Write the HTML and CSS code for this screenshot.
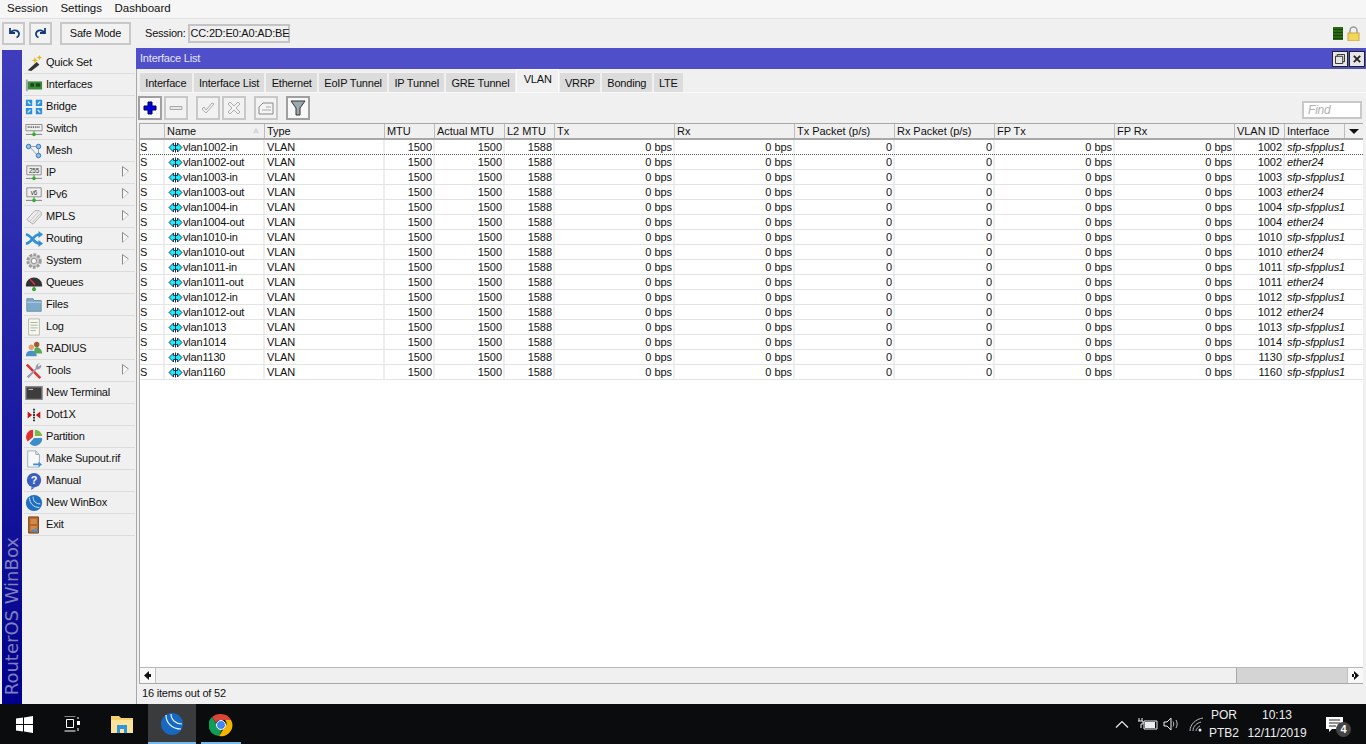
FILE: index.html
```html
<!DOCTYPE html>
<html lang="en">
<head>
<meta charset="utf-8">
<title>WinBox</title>
<link rel="stylesheet" href="styles.css">
</head>
<body>
<svg class="defs" width="0" height="0">
  <symbol id="vl" viewBox="0 0 15 11">
    <path d="M1 5.500 5.500 1v2.500h4V1L14 5.500 9.500 10V7.500h-4V10z" fill="#18eef6" stroke="#0a0a40" stroke-width=".8"/>
    <path d="M7.500.5v10" stroke="#0a2a50"/>
  </symbol>
  <symbol id="ar" viewBox="0 0 7 11">
    <path d="M.5.500v10L6.500 5z" fill="#f6f6f6"/>
    <path d="M.5 10.500V.5L6.500 5" fill="none" stroke="#8a8a8a"/>
    <path d="M6.500 5 .5 10.500" stroke="#d0d0d0"/>
  </symbol>
</svg>
<div class="menubar"><span>Session</span><span>Settings</span><span>Dashboard</span></div>
<div class="toolbar">
  <button class="tb"><svg width="14" height="12" viewBox="0 0 14 12"><path d="M3 1v5h5M3.500 6C5 3 9 2.500 11 4.500s1 5-1.500 6" fill="none" stroke="#123a7a" stroke-width="1.800"/></svg></button>
  <button class="tb"><svg width="14" height="12" viewBox="0 0 14 12"><path d="M11 1v5H6M10.500 6C9 3 5 2.500 3 4.500s-1 5 1.500 6" fill="none" stroke="#123a7a" stroke-width="1.800"/></svg></button>
  <button class="tb safe">Safe Mode</button>
  <span class="sess">Session:</span>
  <span class="sessbox">CC:2D:E0:A0:AD:BE</span>
  <span class="tbright">
    <span class="led"></span>
    <svg width="13" height="15" viewBox="0 0 13 15"><path d="M3 7V4.500a3.500 3.500 0 0 1 7 0V7" fill="none" stroke="#9a9a9a" stroke-width="1.500"/><rect x="1" y="7" width="11" height="8" fill="#f3d659" stroke="#c8a93a"/></svg>
  </span>
</div>
<div class="desk">
  <div class="brand"><span>RouterOS WinBox</span></div>
  <nav class="side">
    <div class="mi"><svg viewBox="0 0 20 20"><path d="M3 18 13 9l3 3-9 7z" fill="#333"/><path d="M11 3l1 3 3 1-3 1-1 3-1-3-3-1 3-1zM16 1l1 2 2 1-2 1-1 2-1-2-2-1 2-1z" fill="#e5b82e"/></svg>Quick Set</div>
    <div class="mi"><svg viewBox="0 0 20 20"><path d="M1 4h2v13H1z" fill="#9aa"/><path d="M3 6h16v9H3z" fill="#3c8a3c"/><path d="M6 8h4v4H6zM12 8h5v4h-5z" fill="#1a4a1a"/></svg>Interfaces</div>
    <div class="mi"><svg viewBox="0 0 20 20"><path d="M1 2h7v7H1zM12 2h7v7h-7zM1 11h7v7H1zM12 11h7v7h-7z" fill="#2d8fd8"/><path d="M3 4l3 3M17 4l-3 3M3 16l3-3M17 16l-3-3" stroke="#cfe8fa" stroke-width="1.500"/></svg>Bridge</div>
    <div class="mi"><svg viewBox="0 0 20 20"><path d="M1 5h18v7H1z" fill="#eee" stroke="#888"/><path d="M3 8h14" stroke="#555" stroke-dasharray="1 1" stroke-width="2"/><path d="M1 16h18" stroke="#777"/><path d="M10 12v4" stroke="#3a3"/><circle cx="10" cy="16" r="2" fill="#3a3"/></svg>Switch</div>
    <div class="mi"><svg viewBox="0 0 20 20"><path d="M4 5h11M15 5v10M6 6l7 8" stroke="#8a9aa8" fill="none"/><circle cx="4" cy="5" r="2.500" fill="#8fc1ea" stroke="#2d6fb0"/><circle cx="15" cy="5" r="2.500" fill="#8fc1ea" stroke="#2d6fb0"/><circle cx="15" cy="15" r="2.500" fill="#8fc1ea" stroke="#2d6fb0"/></svg>Mesh</div>
    <div class="mi"><svg viewBox="0 0 20 20"><path d="M2 2h16v10H2z" fill="#eee" stroke="#888"/><path d="M1 16h18" stroke="#777"/><path d="M10 12v4" stroke="#3a3"/><circle cx="10" cy="16" r="2" fill="#3a3"/><text x="10" y="10" class="ict">255</text></svg>IP<svg class="arr"><use href="#ar"/></svg></div>
    <div class="mi"><svg viewBox="0 0 20 20"><path d="M2 2h16v10H2z" fill="#eee" stroke="#888"/><path d="M1 16h18" stroke="#777"/><path d="M10 12v4" stroke="#3a3"/><circle cx="10" cy="16" r="2" fill="#3a3"/><text x="10" y="10" class="ict">v6</text></svg>IPv6<svg class="arr"><use href="#ar"/></svg></div>
    <div class="mi"><svg viewBox="0 0 20 20"><path d="M2 13 11 3h5l2 2v3l-9 10z" fill="#eee" stroke="#aaa"/><path d="M5 15l10-11M8 16 17 6" stroke="#bbb"/></svg>MPLS<svg class="arr"><use href="#ar"/></svg></div>
    <div class="mi"><svg viewBox="0 0 20 20"><path d="M1 5c6 0 8 10 15 10M1 15c6 0 8-10 15-10" fill="none" stroke="#2d8fd8" stroke-width="3"/><path d="M15 1l5 4-5 4zM15 11l5 4-5 4z" fill="#2d8fd8"/></svg>Routing<svg class="arr"><use href="#ar"/></svg></div>
    <div class="mi"><svg viewBox="0 0 20 20"><circle cx="10" cy="10" r="7" fill="#ccc" stroke="#999" stroke-width="3" stroke-dasharray="3 1.500"/><circle cx="10" cy="10" r="3" fill="#f4f4f4" stroke="#888"/></svg>System<svg class="arr"><use href="#ar"/></svg></div>
    <div class="mi"><svg viewBox="0 0 20 20"><path d="M1 12a9 8 0 0 1 18 0v2H1z" fill="#333"/><path d="M6 6l5 6" stroke="#e33" stroke-width="1.500"/><path d="M10 14v3" stroke="#333"/><circle cx="10" cy="17" r="2.200" fill="#3a3"/></svg>Queues</div>
    <div class="mi"><svg viewBox="0 0 20 20"><path d="M2 3h7l1 2h8v12H2z" fill="#7fa9c9" stroke="#6b8ea8"/><path d="M2 7h16" stroke="#bcd4e6"/></svg>Files</div>
    <div class="mi"><svg viewBox="0 0 20 20"><path d="M4 1h12v18H4z" fill="#f8f8f0" stroke="#b5b5a8"/><path d="M6 5h8M6 8h8M6 11h8M6 14h6" stroke="#9ab09a"/></svg>Log</div>
    <div class="mi"><svg viewBox="0 0 20 20"><circle cx="7" cy="8" r="3" fill="#e0a070"/><path d="M1 18c0-5 3-6 6-6s6 1 6 6z" fill="#4a8fc8"/><circle cx="13" cy="5" r="3" fill="#a05a2a"/><path d="M10 15c0-5 1-7 3-7s6 2 6 7z" fill="#58a85a"/></svg>RADIUS</div>
    <div class="mi"><svg viewBox="0 0 20 20"><path d="M3 2l15 15-2 2L1 4z" fill="#d33"/><path d="M17 2a4 4 0 0 0-5 5L2 16l2 2 9-10a4 4 0 0 0 5-5l-3 2-1-2z" fill="#99a"/></svg>Tools<svg class="arr"><use href="#ar"/></svg></div>
    <div class="mi"><svg viewBox="0 0 20 20"><path d="M1 3h18v14H1z" fill="#3d3d3d" stroke="#888" stroke-width="1.500"/><path d="M4 6h5" stroke="#ddd"/></svg>New Terminal</div>
    <div class="mi"><svg viewBox="0 0 20 20"><path d="M10 3v14" stroke="#222" stroke-dasharray="2 1" stroke-width="2"/><path d="M8 10 3 6v8zM12 10l5-4v8z" fill="#c01818"/></svg>Dot1X</div>
    <div class="mi"><svg viewBox="0 0 20 20"><path d="M9 2a8 8 0 0 0-6 13l6-5z" fill="#d33"/><path d="M11 2a8 8 0 0 1 8 7h-8z" fill="#7cb84a"/><path d="M19 11a8 8 0 0 1-14 6l5-6z" fill="#3a8fc8"/></svg>Partition</div>
    <div class="mi"><svg viewBox="0 0 20 20"><path d="M3 1h9l4 4v14H3z" fill="#f8f8f8" stroke="#9ab"/><path d="M12 1v4h4" fill="#cde" stroke="#9ab"/><path d="M9 15h6v-2l4 3-4 3v-2H9z" fill="#3a8fd8"/></svg>Make Supout.rif</div>
    <div class="mi"><svg viewBox="0 0 20 20"><circle cx="10" cy="9" r="8" fill="#3b5fc0"/><path d="M7 17v3l4-3z" fill="#3b5fc0"/><text x="10" y="13" class="icq">?</text></svg>Manual</div>
    <div class="mi"><svg viewBox="0 0 20 20"><circle cx="10" cy="10" r="9" fill="#1f6fc0"/><path d="M5 4c0 6 4 11 11 11M9 3c0 5 3 8 8 8" fill="none" stroke="#dcecf8"/></svg>New WinBox</div>
    <div class="mi"><svg viewBox="0 0 20 20"><path d="M4 1h11v18H4z" fill="#b5652a" stroke="#7a4018"/><path d="M6 3h7v6H6zM6 11h7v6H6z" fill="#d08a4a"/><path d="M9 15h5v-2l-8 3 8 3v-2" fill="#3a8fd8"/></svg>Exit</div>
  </nav>
  <main class="win">
    <header class="wintitle">
      <span>Interface List</span>
      <span class="wbtns">
        <span class="wbtn"><svg width="11" height="11" viewBox="0 0 11 11"><path d="M.5 2.500h8v8h-8zM2.500 2.500v-2h8v8h-2" fill="none" stroke="#222"/></svg></span>
        <span class="wbtn"><svg width="11" height="11" viewBox="0 0 11 11"><path d="M2 2l7 7M9 2l-7 7" stroke="#222" stroke-width="2"/></svg></span>
      </span>
    </header>
    <div class="tabs">
      <span class="tab">Interface</span><span class="tab">Interface List</span><span class="tab">Ethernet</span><span class="tab">EoIP Tunnel</span><span class="tab">IP Tunnel</span><span class="tab">GRE Tunnel</span><span class="tab on">VLAN</span><span class="tab">VRRP</span><span class="tab">Bonding</span><span class="tab">LTE</span>
    </div>
    <div class="actions">
      <button class="ab"><svg width="14" height="14" viewBox="0 0 14 14"><path d="M5 1h4v4h4v4H9v4H5V9H1V5h4z" fill="#0000e0" stroke="#00004a"/></svg></button>
      <button class="ab"><svg width="14" height="6" viewBox="0 0 14 6"><path d="M1 1.500h12v3H1z" fill="#e6e6e6" stroke="#aaa"/></svg></button>
      <button class="ab gap"><svg width="16" height="14" viewBox="0 0 16 14"><path d="M2 8l4 4 8-9-2-1-6 7-2-3z" fill="#f4f4f4" stroke="#aaa"/></svg></button>
      <button class="ab"><svg width="14" height="14" viewBox="0 0 14 14"><path d="M3 1l4 4 4-4 2 2-4 4 4 4-2 2-4-4-4 4-2-2 4-4-4-4z" fill="#f4f4f4" stroke="#aaa"/></svg></button>
      <button class="ab gap"><svg width="16" height="13" viewBox="0 0 16 13"><path d="M1 5l4-4h10v11H1z" fill="#f4f4f4" stroke="#888"/><path d="M8 5h5M4 8h9" stroke="#aaa"/></svg></button>
      <button class="ab gap"><svg width="16" height="16" viewBox="0 0 16 16"><path d="M1 1h14L10 8v7H6V8z" fill="#9aa8b0" stroke="#333"/></svg></button>
      <span class="find">Find</span>
    </div>
    <section class="grid">
      <div class="row head">
        <span></span><span class="nm">Name<i class="sort"></i></span><span>Type</span><span>MTU</span><span>Actual MTU</span><span>L2 MTU</span><span>Tx</span><span>Rx</span><span>Tx Packet (p/s)</span><span>Rx Packet (p/s)</span><span>FP Tx</span><span>FP Rx</span><span>VLAN ID</span><span>Interface</span><span class="drop"><i></i></span>
      </div>
      <div class="row first"><span class="st">S</span><span class="nm"><svg class="vl"><use href="#vl"/></svg>vlan1002-in</span><span>VLAN</span><span class="r">1500</span><span class="r">1500</span><span class="r">1588</span><span class="r">0 bps</span><span class="r">0 bps</span><span class="r">0</span><span class="r">0</span><span class="r">0 bps</span><span class="r">0 bps</span><span class="r">1002</span><span class="if">sfp-sfpplus1</span></div>
      <div class="row"><span class="st">S</span><span class="nm"><svg class="vl"><use href="#vl"/></svg>vlan1002-out</span><span>VLAN</span><span class="r">1500</span><span class="r">1500</span><span class="r">1588</span><span class="r">0 bps</span><span class="r">0 bps</span><span class="r">0</span><span class="r">0</span><span class="r">0 bps</span><span class="r">0 bps</span><span class="r">1002</span><span class="if">ether24</span></div>
      <div class="row"><span class="st">S</span><span class="nm"><svg class="vl"><use href="#vl"/></svg>vlan1003-in</span><span>VLAN</span><span class="r">1500</span><span class="r">1500</span><span class="r">1588</span><span class="r">0 bps</span><span class="r">0 bps</span><span class="r">0</span><span class="r">0</span><span class="r">0 bps</span><span class="r">0 bps</span><span class="r">1003</span><span class="if">sfp-sfpplus1</span></div>
      <div class="row"><span class="st">S</span><span class="nm"><svg class="vl"><use href="#vl"/></svg>vlan1003-out</span><span>VLAN</span><span class="r">1500</span><span class="r">1500</span><span class="r">1588</span><span class="r">0 bps</span><span class="r">0 bps</span><span class="r">0</span><span class="r">0</span><span class="r">0 bps</span><span class="r">0 bps</span><span class="r">1003</span><span class="if">ether24</span></div>
      <div class="row"><span class="st">S</span><span class="nm"><svg class="vl"><use href="#vl"/></svg>vlan1004-in</span><span>VLAN</span><span class="r">1500</span><span class="r">1500</span><span class="r">1588</span><span class="r">0 bps</span><span class="r">0 bps</span><span class="r">0</span><span class="r">0</span><span class="r">0 bps</span><span class="r">0 bps</span><span class="r">1004</span><span class="if">sfp-sfpplus1</span></div>
      <div class="row"><span class="st">S</span><span class="nm"><svg class="vl"><use href="#vl"/></svg>vlan1004-out</span><span>VLAN</span><span class="r">1500</span><span class="r">1500</span><span class="r">1588</span><span class="r">0 bps</span><span class="r">0 bps</span><span class="r">0</span><span class="r">0</span><span class="r">0 bps</span><span class="r">0 bps</span><span class="r">1004</span><span class="if">ether24</span></div>
      <div class="row"><span class="st">S</span><span class="nm"><svg class="vl"><use href="#vl"/></svg>vlan1010-in</span><span>VLAN</span><span class="r">1500</span><span class="r">1500</span><span class="r">1588</span><span class="r">0 bps</span><span class="r">0 bps</span><span class="r">0</span><span class="r">0</span><span class="r">0 bps</span><span class="r">0 bps</span><span class="r">1010</span><span class="if">sfp-sfpplus1</span></div>
      <div class="row"><span class="st">S</span><span class="nm"><svg class="vl"><use href="#vl"/></svg>vlan1010-out</span><span>VLAN</span><span class="r">1500</span><span class="r">1500</span><span class="r">1588</span><span class="r">0 bps</span><span class="r">0 bps</span><span class="r">0</span><span class="r">0</span><span class="r">0 bps</span><span class="r">0 bps</span><span class="r">1010</span><span class="if">ether24</span></div>
      <div class="row"><span class="st">S</span><span class="nm"><svg class="vl"><use href="#vl"/></svg>vlan1011-in</span><span>VLAN</span><span class="r">1500</span><span class="r">1500</span><span class="r">1588</span><span class="r">0 bps</span><span class="r">0 bps</span><span class="r">0</span><span class="r">0</span><span class="r">0 bps</span><span class="r">0 bps</span><span class="r">1011</span><span class="if">sfp-sfpplus1</span></div>
      <div class="row"><span class="st">S</span><span class="nm"><svg class="vl"><use href="#vl"/></svg>vlan1011-out</span><span>VLAN</span><span class="r">1500</span><span class="r">1500</span><span class="r">1588</span><span class="r">0 bps</span><span class="r">0 bps</span><span class="r">0</span><span class="r">0</span><span class="r">0 bps</span><span class="r">0 bps</span><span class="r">1011</span><span class="if">ether24</span></div>
      <div class="row"><span class="st">S</span><span class="nm"><svg class="vl"><use href="#vl"/></svg>vlan1012-in</span><span>VLAN</span><span class="r">1500</span><span class="r">1500</span><span class="r">1588</span><span class="r">0 bps</span><span class="r">0 bps</span><span class="r">0</span><span class="r">0</span><span class="r">0 bps</span><span class="r">0 bps</span><span class="r">1012</span><span class="if">sfp-sfpplus1</span></div>
      <div class="row"><span class="st">S</span><span class="nm"><svg class="vl"><use href="#vl"/></svg>vlan1012-out</span><span>VLAN</span><span class="r">1500</span><span class="r">1500</span><span class="r">1588</span><span class="r">0 bps</span><span class="r">0 bps</span><span class="r">0</span><span class="r">0</span><span class="r">0 bps</span><span class="r">0 bps</span><span class="r">1012</span><span class="if">ether24</span></div>
      <div class="row"><span class="st">S</span><span class="nm"><svg class="vl"><use href="#vl"/></svg>vlan1013</span><span>VLAN</span><span class="r">1500</span><span class="r">1500</span><span class="r">1588</span><span class="r">0 bps</span><span class="r">0 bps</span><span class="r">0</span><span class="r">0</span><span class="r">0 bps</span><span class="r">0 bps</span><span class="r">1013</span><span class="if">sfp-sfpplus1</span></div>
      <div class="row"><span class="st">S</span><span class="nm"><svg class="vl"><use href="#vl"/></svg>vlan1014</span><span>VLAN</span><span class="r">1500</span><span class="r">1500</span><span class="r">1588</span><span class="r">0 bps</span><span class="r">0 bps</span><span class="r">0</span><span class="r">0</span><span class="r">0 bps</span><span class="r">0 bps</span><span class="r">1014</span><span class="if">sfp-sfpplus1</span></div>
      <div class="row"><span class="st">S</span><span class="nm"><svg class="vl"><use href="#vl"/></svg>vlan1130</span><span>VLAN</span><span class="r">1500</span><span class="r">1500</span><span class="r">1588</span><span class="r">0 bps</span><span class="r">0 bps</span><span class="r">0</span><span class="r">0</span><span class="r">0 bps</span><span class="r">0 bps</span><span class="r">1130</span><span class="if">sfp-sfpplus1</span></div>
      <div class="row"><span class="st">S</span><span class="nm"><svg class="vl"><use href="#vl"/></svg>vlan1160</span><span>VLAN</span><span class="r">1500</span><span class="r">1500</span><span class="r">1588</span><span class="r">0 bps</span><span class="r">0 bps</span><span class="r">0</span><span class="r">0</span><span class="r">0 bps</span><span class="r">0 bps</span><span class="r">1160</span><span class="if">sfp-sfpplus1</span></div>
    </section>
    <div class="hscroll">
      <span class="sbtn"><svg width="7" height="9" viewBox="0 0 7 9"><path d="M5 0v9L0 4.500z M4 3h3v3H4z" fill="#111"/></svg></span>
      <span class="strack"></span>
      <span class="sthumb"></span>
      <span class="sbtn"><svg width="7" height="9" viewBox="0 0 7 9"><path d="M2 0v9l5-4.500z M0 3h3v3H0z" fill="#111"/></svg></span>
    </div>
    <div class="status">16 items out of 52</div>
  </main>
</div>
<footer class="taskbar">
  <span class="tk start"><svg width="17" height="17" viewBox="0 0 17 17"><path d="M0 2.500 7 1.500v6.500H0zM8 1.400 17 0v8H8zM0 9h7v6.500L0 14.500zM8 9h9v8l-9-1.400z" fill="#fff"/></svg></span>
  <span class="tk view"><svg width="17" height="16" viewBox="0 0 17 16"><path d="M.5 0h11M.5 15h11M2.500 3.500h7v8h-7zM14 1v2M14 12v3" stroke="#fff" fill="none"/><path d="M13 5h3v4h-3z" fill="#fff"/></svg></span>
  <span class="tk folder"><svg width="22" height="18" viewBox="0 0 22 18"><path d="M0 1h8l2 2h12v15H0z" fill="#f4cf6a"/><path d="M0 5h22v13H0z" fill="#fbe39a"/><path d="M6 10h10v8h-3v-4H9v4H6z" fill="#2c97de"/></svg></span>
  <span class="tk active"><svg width="24" height="24" viewBox="0 0 24 24"><circle cx="12" cy="12" r="11" fill="#1668c0"/><path d="M6 3c0 8 6 14 15 14M11 2c0 6 5 10 11 10" fill="none" stroke="#e3f0fb" stroke-width="1.200"/></svg></span>
  <span class="tk chrome"><svg width="24" height="24" viewBox="0 0 24 24"><path d="M12 1a11 11 0 0 1 10 6H12a5 5 0 0 0-5 3L3 4a11 11 0 0 1 9-3z" fill="#db4437"/><path d="M3 4l5 8a5 5 0 0 0 5 4l-3 7A11 11 0 0 1 3 4z" fill="#0f9d58"/><path d="M22 7a11 11 0 0 1-12 16l5-8a5 5 0 0 0 1-8z" fill="#f4b400"/><circle cx="12" cy="12" r="4.500" fill="#4285f4" stroke="#fff"/></svg></span>
  <span class="tray">
    <svg width="14" height="8" viewBox="0 0 14 8"><path d="M1 7.500 7 1.500l6 6" fill="none" stroke="#eee" stroke-width="1.200"/></svg>
    <svg width="20" height="14" viewBox="0 0 20 14"><path d="M6 4h13v8H6z" fill="none" stroke="#eee"/><path d="M7 5h10v6H7z" fill="#eee"/><path d="M1 1v3M4 1v3M0 4h5v3H3v4" stroke="#eee" fill="none"/></svg>
    <svg width="17" height="14" viewBox="0 0 17 14"><path d="M1 5h3l4-4v12L4 9H1z" fill="none" stroke="#eee"/><path d="M10 4.500c1 1.500 1 3.500 0 5M13 3c1.500 2.500 1.500 5.500 0 8" fill="none" stroke="#bbb"/></svg>
    <svg class="wifi" width="15" height="15" viewBox="0 0 15 15"><path d="M1 14C1 7 7 2 14 1M4 14c0-5 4-8 8-9M7 14c0-2 2-4 4-5" fill="none" stroke="#bbb"/><circle cx="11" cy="13" r="1.500" fill="#eee"/></svg>
    <span class="lang"><span>POR</span><span>PTB2</span></span>
    <span class="clock"><span>10:13</span><span>12/11/2019</span></span>
    <span class="notif"><svg width="17" height="15" viewBox="0 0 17 15"><path d="M0 0h17v12H6l-3 3v-3H0z" fill="#fff"/><path d="M3 3h11M3 6h11M3 9h7" stroke="#222"/></svg><b>4</b></span>
  </span>
</footer>
</body>
</html>
```

FILE: styles.css
```css
* { box-sizing: border-box; }
html, body { margin: 0; padding: 0; }
body {
  width: 1366px; height: 744px; overflow: hidden;
  display: flex; flex-direction: column;
  background: #f0f0f0; color: #111;
  font: 11px/15px "Liberation Sans", Arial, sans-serif;
  letter-spacing: -.2px;
}
svg { display: block; flex: none; }
.defs { position: absolute; }
button { font: inherit; letter-spacing: inherit; color: inherit; padding: 0; background: #f0f0f0; }

.menubar { height: 18px; flex: none; display: flex; gap: 12.500px; padding: 1px 0 0 7px; background: #f6f6f6; font-size: 11.500px; letter-spacing: 0; }

.toolbar { height: 30px; flex: none; display: flex; align-items: center; padding: 3px 0 4px 2px; gap: 4px; background: #f0f0f0; border-top: 1px solid #e2e2e2; }
.tb { height: 23px; width: 23px; border: 2px solid #c8c8c8; display: flex; align-items: center; justify-content: center; background: #f2f2f2; }
.tb.safe { width: 71px; margin-left: 4px; }
.sess { margin-left: 10px; }
.sessbox { margin-left: -2px; height: 19px; width: 102px; border: 2px solid #c4c4c4; background: #f0f0f0; padding-left: 1px; line-height: 15px; white-space: nowrap; }
.tbright { margin-left: auto; display: flex; align-items: center; gap: 4px; padding-right: 6px; }
.led { width: 10px; height: 13px; background: repeating-linear-gradient(#2a6a12 0 2px, #174708 2px 3px); }

.desk { flex: 1; min-height: 0; display: flex; padding-left: 2px; }
.brand { width: 20px; flex: none; margin-top: 2px; background: linear-gradient(#3d3dbd, #00008c); display: flex; align-items: flex-end; justify-content: center; padding-bottom: 9px; }
.brand span { writing-mode: vertical-rl; transform: rotate(180deg); font: 18px/20px "DejaVu Sans", sans-serif; color: #8080bc; letter-spacing: 0; white-space: nowrap; }
.side { width: 113px; flex: none; padding: 4px 0 0 2px; }
.mi { height: 22px; width: 111px; display: flex; align-items: center; gap: 3px; border-bottom: 1px solid #dcdcdc; padding-left: 1px; position: relative; white-space: nowrap; }
.mi svg { width: 18px; height: 18px; }
.mi .arr { position: absolute; right: 6px; top: 4px; width: 7px; height: 11px; }
.ict { font: 7px "Liberation Sans", sans-serif; text-anchor: middle; fill: #333; }
.icq { font: bold 12px "Liberation Sans", sans-serif; text-anchor: middle; fill: #fff; }

.win { width: 1230px; flex: none; margin-left: 1px; border-left: 1px solid #a8a8a8; display: flex; flex-direction: column; }
.wintitle { height: 21px; flex: none; margin-left: -1px; background: #4f50c9; color: #e4e4f6; display: flex; align-items: center; justify-content: space-between; padding: 0 1px 0 4px; }
.wbtns { display: flex; gap: 1px; }
.wbtn { width: 16px; height: 16px; background: #e6e6e6; border: 1px solid #222; display: flex; align-items: center; justify-content: center; }
.wbtn svg { width: 10px; height: 10px; }

.tabs { height: 24px; flex: none; display: flex; align-items: flex-end; gap: 2px; padding: 0 0 0 3px; border-bottom: 1px solid #fafafa; }
.tab { height: 20px; background: #dcdcdc; padding: 3px 5.300px 0; white-space: nowrap; border-top: 1px solid #f4f4f4; }
.tab.on { height: 23px; background: #f0f0f0; padding: 2px 6px 0 7px; margin: 0 -1px; border: 1px solid #fafafa; border-bottom: 0; }

.actions { height: 30px; flex: none; display: flex; align-items: flex-start; gap: 2px; padding: 3px 0 0 1px; }
.ab { width: 24px; height: 24px; border: 2px solid #c8c8c8; background: #f2f2f2; display: flex; align-items: center; justify-content: center; }
.ab:first-child, .ab:last-of-type { border-color: #a0a0a0; background: #f8f8f8; }
.ab.gap { margin-left: 6px; }
.find { margin: 5px 4px 0 auto; width: 60px; height: 18px; border: 2px solid #c8c8c8; background: #fff; color: #b0b0b0; font-style: italic; font-size: 12px; padding-left: 4px; line-height: 15px; }

.grid { flex: 1; min-height: 0; margin: 0 3px 0 2px; background: #fff; border-top: 1px solid #a8a8a8; border-left: 1px solid #a8a8a8; border-bottom: 1px solid #b8b8b8; }
.row { display: grid; grid-template-columns: 25px 100px 120px 50px 70px 50px 120px 120px 100px 100px 120px 120px 50px 60px 17px; height: 15px; border-bottom: 1px solid #e4e4e4; line-height: 14px; white-space: nowrap; }
.row > span { padding: 0 1px 0 2px; overflow: hidden; border-right: 2px solid #eeeeee; }
.row > .st { padding-left: 0; }
.row > .r { text-align: right; letter-spacing: -.05px; }
.row > .if { font-style: italic; padding-left: 2px; letter-spacing: -.1px; overflow: visible; border-right: 0; }
.row > .nm { display: flex; align-items: center; padding-left: 3px; }
.vl { width: 15px; height: 11px; margin-right: 0; }
.head { height: 16px; background: #f0f0f0; border-bottom: 2px solid #a8a8a8; letter-spacing: -.05px; line-height: 15px; }
.head > span { border-right: 1px solid #bcbcbc; padding-left: 2px; }
.head > .nm { padding-left: 2px; position: relative; }
.sort { position: absolute; right: 5px; top: 3px; border-left: 3.500px solid transparent; border-right: 3.500px solid transparent; border-bottom: 6px solid #d8d8d8; }
.row > .drop { border-right: 0; display: flex; align-items: center; justify-content: center; padding: 0; }
.drop i { border-left: 5px solid transparent; border-right: 5px solid transparent; border-top: 5px solid #111; }
.first { border-bottom: 1px dotted #555; }

.hscroll { height: 16px; flex: none; margin: 0 3px 0 2px; display: flex; background: #f0f0f0; border-bottom: 1px solid #a8a8a8; border-left: 1px solid #a8a8a8; }
.sbtn { width: 16px; flex: none; display: flex; align-items: center; justify-content: center; background: #f8f8f8; border-right: 1px solid #c0c0c0; }
.sbtn:last-child { border-left: 1px solid #c0c0c0; border-right: 0; }
.strack { flex: 1; background: #f0f0f0; border-right: 1px solid #a8a8a8; }
.sthumb { width: 110px; background: #d4d4d4; }
.status { height: 20px; flex: none; padding: 2px 0 0 5px; }

.taskbar { height: 40px; flex: none; background: #0b0c0e; display: flex; align-items: stretch; color: #eee; letter-spacing: 0; }
.tk { display: flex; align-items: center; justify-content: center; }
.start { width: 48px; }
.view { width: 48px; }
.folder { width: 52px; }
.active { width: 48px; background: #3a3b3d; border-bottom: 2px solid #76b9ed; padding-top: 2px; }
.chrome { width: 40px; margin-left: 5px; padding-top: 2px; position: relative; }
.chrome::after { content: ""; position: absolute; left: 0; right: 0; bottom: 0; height: 2px; background: #76b9ed; }
.tray { margin-left: auto; display: flex; align-items: center; font-size: 12px; line-height: 18px; }
.tray > svg:nth-child(1) { margin-right: 9px; }
.tray > svg:nth-child(2) { margin-right: 5px; }
.tray > svg:nth-child(3) { margin-right: 7px; }
.wifi { margin-left: 2px; }
.lang { display: flex; flex-direction: column; align-items: center; width: 30px; margin-left: 5px; }
.clock { display: flex; flex-direction: column; align-items: center; width: 58px; margin-left: 9px; }
.notif { width: 40px; margin-left: 8px; margin-right: 12px; position: relative; display: flex; justify-content: center; }
.notif b { position: absolute; left: 22px; top: 5px; width: 15px; height: 15px; border-radius: 50%; background: #444; color: #fff; font-size: 11px; line-height: 15px; text-align: center; }
```
